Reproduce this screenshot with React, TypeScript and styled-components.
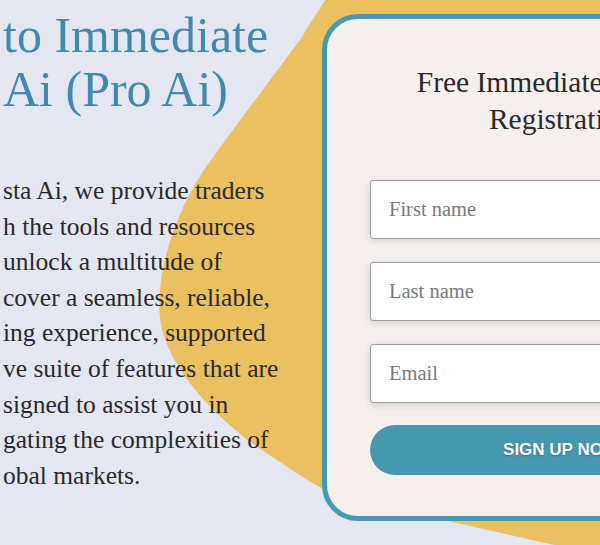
import React from "react";
import styled, { createGlobalStyle } from "styled-components";

const Global = createGlobalStyle`
  html, body { margin: 0; padding: 0; background: #e4e6f2; }
  body { overflow: hidden; }
  * { box-sizing: border-box; }
`;

const Page = styled.div`
  position: relative;
  width: 600px;
  height: 545px;
  overflow: hidden;
  background: #e4e6f2;
  display: flex;
  align-items: flex-start;
  font-family: "Liberation Serif", "Times New Roman", serif;
`;

const Blob = styled.svg`
  position: absolute;
  left: 0;
  top: 0;
  z-index: 0;
`;

const LeftCol = styled.section`
  position: relative;
  z-index: 1;
  flex: 0 0 322px;
  padding: 8px 0 0 3px;
`;

const Heading = styled.h1`
  margin: 0;
  font-family: "Liberation Serif", "Times New Roman", serif;
  font-weight: 400;
  font-size: 50px;
  line-height: 54px;
  color: #4289ad;
  white-space: nowrap;
`;

const Lead = styled.p`
  margin: 57px 0 0 0;
  font-size: 25.5px;
  line-height: 35.6px;
  color: #2a2a2a;
  white-space: nowrap;
`;

const Card = styled.section`
  position: relative;
  z-index: 1;
  flex: 0 0 478px;
  margin-top: 14px;
  border: 5px solid #4599b2;
  border-radius: 36px;
  background: #f5f0ee;
  padding: 45px 43px 41px;
`;

const CardTitle = styled.h2`
  margin: 0;
  font-weight: 400;
  font-size: 29.5px;
  line-height: 37px;
  color: #2a2a2a;
  text-align: center;
  white-space: nowrap;
`;

const Form = styled.form`
  margin-top: 42px;
  display: flex;
  flex-direction: column;
  gap: 23px;
`;

const Input = styled.input`
  display: block;
  width: 100%;
  height: 59px;
  padding: 0 18px;
  border: 1px solid #9c9c9e;
  border-radius: 3px;
  background: #ffffff;
  box-shadow: 0 2px 7px rgba(0, 0, 0, 0.14);
  font-family: "Liberation Serif", "Times New Roman", serif;
  font-size: 20.5px;
  color: #333;
  outline: none;
  &::placeholder { color: #7a7a7a; }
`;

const Button = styled.button`
  margin-top: -1px;
  height: 50px;
  width: 100%;
  border: none;
  border-radius: 25px;
  background: #4598b0;
  color: #ffffff;
  font-family: "Liberation Sans", Arial, sans-serif;
  font-weight: 700;
  font-size: 17px;
  text-transform: uppercase;
  text-shadow: 0 1px 2px rgba(0, 0, 0, 0.25);
  cursor: pointer;
`;

export default function App() {
  return (
    <>
      <Global />
      <Page>
        <Blob width="600" height="545" viewBox="0 0 600 545" aria-hidden="true">
          <path
            d="M 327 -2 C 312 20, 305 32, 300 40 C 270 80, 240 120, 211 160 C 172 212, 150 290, 163 333 C 176 378, 225 428, 277 460 C 295 472, 312 484, 335 495 L 620 560 L 620 -2 Z"
            fill="#eac060"
          />
        </Blob>
        <LeftCol>
          <Heading>
            to Immediate
            <br />
            Ai (Pro Ai)
          </Heading>
          <Lead>
            sta Ai, we provide traders
            <br />
            h the tools and resources
            <br />
            unlock a multitude of
            <br />
            cover a seamless, reliable,
            <br />
            ing experience, supported
            <br />
            ve suite of features that are
            <br />
            signed to assist you in
            <br />
            gating the complexities of
            <br />
            obal markets.
          </Lead>
        </LeftCol>
        <Card>
          <CardTitle>
            Free Immediate Vista Ai
            <br />
            Registration
          </CardTitle>
          <Form onSubmit={(e) => e.preventDefault()}>
            <Input type="text" placeholder="First name" />
            <Input type="text" placeholder="Last name" />
            <Input type="email" placeholder="Email" />
            <Button type="submit">Sign up now</Button>
          </Form>
        </Card>
      </Page>
    </>
  );
}
